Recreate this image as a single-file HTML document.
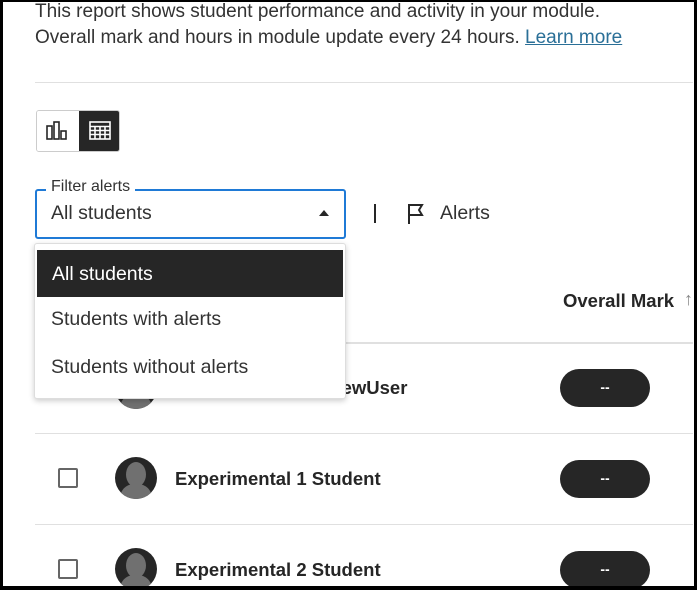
<!DOCTYPE html>
<html><head><meta charset="utf-8"><style>
*{box-sizing:border-box;margin:0;padding:0}
body{width:700px;height:591px;overflow:hidden;background:#fff;font-family:"Liberation Sans",sans-serif;color:#262626;position:relative}
.frame{position:absolute;left:0;top:0;width:697px;height:590px;border:3px solid #000;border-top-width:2px;border-bottom-width:4px}
.abs{position:absolute}
.t{font-size:19px;color:#333;white-space:nowrap}
.line{position:absolute;left:35px;right:7px;height:1px;background:#e0e0e0}
.cb{position:absolute;left:58px;width:20px;height:20px;border:2px solid #666;border-radius:2px}
.av{position:absolute;left:115px;width:42px;height:42px;border-radius:50%;background:#262626;overflow:hidden}
.av .h{position:absolute;left:11px;top:5px;width:20px;height:25px;border-radius:50%;background:#707070}
.av .b{position:absolute;left:5px;top:27px;width:32px;height:24px;border-radius:14px 14px 0 0;background:#707070}
.nm{position:absolute;left:175px;font-size:18.5px;font-weight:bold;color:#262626;white-space:nowrap}
.pill{position:absolute;left:560px;width:90px;height:38px;border-radius:19px;background:#262626;color:#fff;text-align:center;line-height:37px;font-size:14px;font-weight:bold}
.it{font-size:19.5px;color:#333;white-space:nowrap}
</style></head><body>
<div class="abs t" style="left:35px;top:1px;">This report shows student performance and activity in your module.</div>
<div class="abs t" style="left:35px;top:27px;">Overall mark and hours in module update every 24 hours. <span style="color:#2a6f97;text-decoration:underline">Learn more</span></div>
<div class="line" style="top:82px"></div>

<div class="abs" style="left:36px;top:110px;width:84px;height:42px;border:1px solid #ccc;border-radius:3px;overflow:hidden">
 <div class="abs" style="left:0;top:0;width:42px;height:40px;background:#fff">
  <svg width="42" height="40" viewBox="0 0 42 40"><g fill="none" stroke="#262626" stroke-width="1.6"><rect x="10" y="15" width="5" height="13"/><rect x="17" y="11" width="5" height="17"/><rect x="24" y="20" width="5" height="8"/></g></svg>
 </div>
 <div class="abs" style="left:42px;top:0;width:42px;height:40px;background:#262626">
  <svg width="42" height="40" viewBox="0 0 42 40"><g fill="none" stroke="#fff" stroke-width="1.6"><rect x="11" y="11" width="20" height="17"/><path d="M11 15.5h20M11 19.5h20M11 23.5h20M16 15.5v12.5M21 15.5v12.5M26 15.5v12.5"/></g></svg>
 </div>
</div>

<div class="abs" style="left:35px;top:189px;width:311px;height:50px;border:2px solid #1f7ad6;border-radius:3px"></div>
<div class="abs" style="left:46px;top:178px;background:#fff;padding:0 5px;font-size:16px;color:#333">Filter alerts</div>
<div class="abs it" style="left:51px;top:202px;">All students</div>
<div class="abs" style="left:319px;top:210px;width:0;height:0;border-left:5px solid transparent;border-right:5px solid transparent;border-bottom:6px solid #262626"></div>
<div class="abs" style="left:374px;top:204px;width:2px;height:19px;background:#262626"></div>
<svg class="abs" style="left:406px;top:203px" width="20" height="22" viewBox="0 0 20 22"><path d="M3 21V2h13l-3 5 3 5H4" fill="none" stroke="#262626" stroke-width="2"/></svg>
<div class="abs it" style="left:440px;top:202px;">Alerts</div>

<div class="abs" style="left:563px;top:290px;font-size:18.5px;font-weight:bold;color:#262626;white-space:nowrap">Overall Mark</div>
<div class="abs" style="left:684px;top:289px;font-size:18px;font-weight:bold;color:#888">&#8593;</div>
<div class="line" style="top:342px;height:2px"></div>

<div class="av" style="top:367px"><div class="h"></div><div class="b"></div></div>
<div class="nm" style="top:377px">Experimental PreviewUser</div>
<div class="pill" style="top:369px">--</div>
<div class="line" style="top:433px"></div>

<div class="cb" style="top:468px"></div>
<div class="av" style="top:457px"><div class="h"></div><div class="b"></div></div>
<div class="nm" style="top:468px">Experimental 1 Student</div>
<div class="pill" style="top:460px">--</div>
<div class="line" style="top:524px"></div>

<div class="cb" style="top:559px"></div>
<div class="av" style="top:548px"><div class="h"></div><div class="b"></div></div>
<div class="nm" style="top:559px">Experimental 2 Student</div>
<div class="pill" style="top:551px">--</div>

<div class="abs" style="left:34px;top:243px;width:312px;height:156px;background:#fff;border:1px solid #ddd;border-radius:3px;box-shadow:0 2px 6px rgba(0,0,0,.2)">
 <div class="abs it" style="left:2px;top:6px;width:306px;height:47px;background:#262626;color:#fff;padding:13px 0 0 15px">All students</div>
 <div class="abs it" style="left:16px;top:64px;">Students with alerts</div>
 <div class="abs it" style="left:16px;top:112px;">Students without alerts</div>
</div>
<div class="frame"></div>
</body></html>
